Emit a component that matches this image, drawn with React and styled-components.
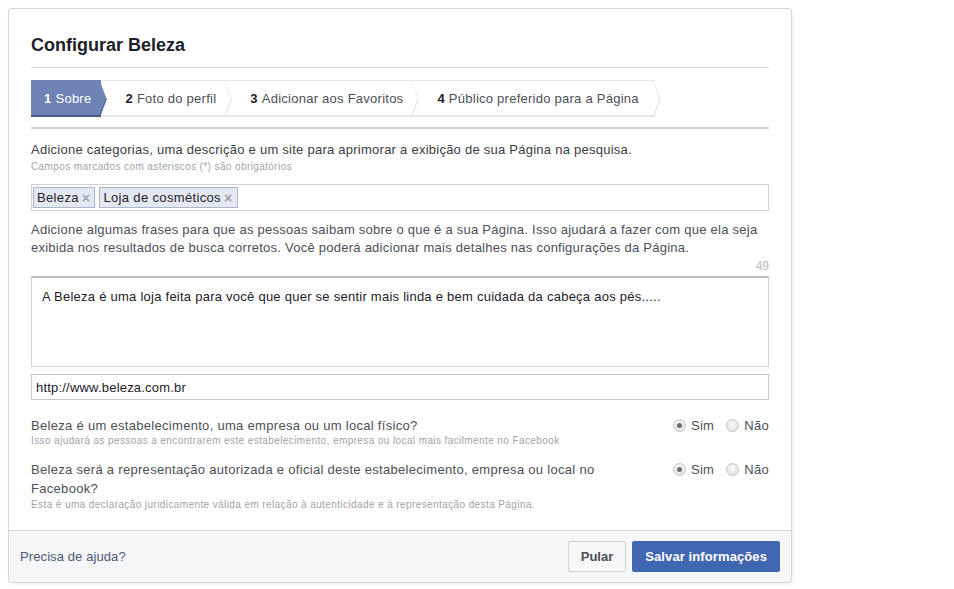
import React, { useState } from 'react'
import styled, { createGlobalStyle } from 'styled-components'

const Global = createGlobalStyle`
	body {
		margin: 0;
		background: #fff;
		font-family: "Liberation Sans", Arial, sans-serif;
		color: #4b4f56;
	}
`

const Card = styled.div`
	margin: 8px;
	width: 782px;
	border: 1px solid #d3d6db;
	border-radius: 3px;
	box-shadow: 1px 1px 3px rgba(0,0,0,0.08);
	background: #fff;
	overflow: hidden;
`

const Body = styled.div`
	padding: 0 22px 19px 22px;
`

const Header = styled.div`
	padding: 25px 0 11px;
	border-bottom: 1px solid #d6d8dc;
`

const Title = styled.h1`
	margin: 0;
	font-size: 18px;
	line-height: 22px;
	font-weight: bold;
	color: #1d2129;
`

const Steps = styled.div`
	display: flex;
	margin-top: 12px;
	height: 37px;
`

const Step = styled.div`
	position: relative;
	display: flex;
	align-items: center;
	height: 34px;
	padding: 0 ${(props) => (props.last ? '16px' : '10px')} 0 ${(props) => (props.first ? '13px' : '24px')};
	background: ${(props) => (props.active ? '#6d84b4' : '#fff')};
	border-top: 1px solid ${(props) => (props.active ? '#6d84b4' : '#e4e6ea')};
	border-bottom: 2px solid ${(props) => (props.active ? '#4a5d89' : '#e4e6ea')};
	color: ${(props) => (props.active ? '#fff' : '#4b4f56')};
	font-size: 13px;
	letter-spacing: 0.25px;
	z-index: ${(props) => props.z};
	&:after {
		content: "";
		position: absolute;
		top: 5px;
		right: -12px;
		width: 25px;
		height: 25px;
		background: ${(props) => (props.active ? '#6d84b4' : '#fff')};
		border-top: 1px solid ${(props) => (props.active ? '#6d84b4' : '#dcdee3')};
		border-right: 2px solid ${(props) => (props.active ? '#4a5d89' : '#dcdee3')};
		transform: scaleX(0.38) rotate(45deg);
	}
	b {
		font-weight: bold;
		color: ${(props) => (props.active ? '#fff' : '#1d2129')};
		margin-right: 4px;
	}
`

const Divider = styled.div`
	margin-top: 10px;
	height: 2px;
	background: #cfd1d5;
`

const Intro = styled.p`
	margin: 13px 0 0;
	font-size: 13px;
	line-height: 16px;
	color: #3a3d42;
	letter-spacing: 0.25px;
`

const Hint = styled.p`
	margin: ${(props) => props.m || '3px 0 0'};
	font-size: 10px;
	line-height: 12px;
	color: #a0a3a8;
	letter-spacing: 0.4px;
`

const TagBox = styled.div`
	margin-top: 11px;
	height: 25px;
	border: 1px solid #cfd1d5;
	display: flex;
	align-items: center;
	gap: 4px;
	padding: 0 1px;
`

const Tag = styled.span`
	display: inline-flex;
	align-items: center;
	height: 19px;
	padding: 0 4px 0 3px;
	background: #e4e8f1;
	border: 1px solid #a9b6d0;
	font-size: 13px;
	letter-spacing: 0.35px;
	color: #1d2129;
	span {
		margin-left: 3px;
		color: #9aa3b6;
		font-size: 14px;
		font-weight: bold;
	}
`

const Desc = styled.p`
	margin: 10px 0 0;
	font-size: 13px;
	line-height: 18px;
	color: #4b4f56;
	letter-spacing: 0.25px;
`

const Counter = styled.div`
	margin-top: 2px;
	text-align: right;
	font-size: 12px;
	line-height: 14px;
	color: #b8bbc0;
`

const Area = styled.div`
	margin-top: 3px;
	height: 91px;
	border: 1px solid #cfd1d5;
	border-top: 2px solid #b8bcc3;
	padding: 11px 10px;
	box-sizing: border-box;
	font-size: 13px;
	letter-spacing: 0.25px;
	color: #1d2129;
`

const Input = styled.div`
	margin-top: 7px;
	height: 26px;
	border: 1px solid #c4c7cc;
	box-sizing: border-box;
	display: flex;
	align-items: center;
	padding: 0 4px;
	font-size: 13px;
	letter-spacing: 0.2px;
	color: #1d2129;
`

const Question = styled.div`
	display: flex;
	justify-content: space-between;
	margin-top: ${(props) => props.mt};
`

const QText = styled.div`
	width: 620px;
	font-size: 13px;
	line-height: 19px;
	color: #4b4f56;
	letter-spacing: 0.3px;
`

const Radios = styled.div`
	display: flex;
	align-items: center;
	height: 19px;
	gap: 12px;
	font-size: 13px;
	letter-spacing: 0.3px;
	color: #4b4f56;
`

const RadioLabel = styled.label`
	display: flex;
	align-items: center;
	gap: 5px;
	cursor: pointer;
`

const Dot = styled.span`
	width: 11px;
	height: 11px;
	border-radius: 50%;
	border: 1px solid #c3c5c9;
	background: radial-gradient(circle at 50% 40%, #fafafa, #dcdde0);
	display: flex;
	align-items: center;
	justify-content: center;
	&:after {
		content: "";
		width: 5px;
		height: 5px;
		border-radius: 50%;
		background: ${(props) => (props.on ? '#6a6d73' : 'transparent')};
	}
`

const Footer = styled.div`
	display: flex;
	align-items: center;
	justify-content: space-between;
	height: 51px;
	padding: 0 11px;
	background: #f5f6f7;
	border-top: 1px solid #d3d6db;
`

const Help = styled.a`
	font-size: 13px;
	color: #4b5a78;
	text-decoration: none;
	letter-spacing: 0.1px;
`

const Buttons = styled.div`
	display: flex;
	gap: 6px;
`

const Button = styled.button`
	height: 31px;
	padding: 0 ${(props) => (props.primary ? '12px' : '12px')};
	border-radius: 2px;
	font-family: inherit;
	font-size: 13px;
	letter-spacing: ${(props) => (props.primary ? '0.1px' : '0')};
	font-weight: bold;
	border: 1px solid ${(props) => (props.primary ? '#4267b2' : '#ced0d4')};
	background: ${(props) => (props.primary ? '#4267b2' : '#f6f7f9')};
	color: ${(props) => (props.primary ? '#fff' : '#4b4f56')};
`

const Radio = ({ value, onChange }) => (
	<Radios>
		<RadioLabel onClick={() => onChange(true)}><Dot on={value} />Sim</RadioLabel>
		<RadioLabel onClick={() => onChange(false)}><Dot on={!value} />Não</RadioLabel>
	</Radios>
)

const steps = [
	['1', 'Sobre'],
	['2', 'Foto do perfil'],
	['3', 'Adicionar aos Favoritos'],
	['4', 'Público preferido para a Página'],
]

const App = () => {
	const [local, setLocal] = useState(true)
	const [oficial, setOficial] = useState(true)
	return (
		<>
			<Global />
			<Card>
				<Body>
					<Header>
						<Title>Configurar Beleza</Title>
					</Header>
					<Steps>
						{steps.map(([n, label], i) => (
							<Step key={n} active={i === 0} first={i === 0} last={i === 3} z={10 - i}>
								<b>{n}</b>{label}
							</Step>
						))}
					</Steps>
					<Divider />
					<Intro>Adicione categorias, uma descrição e um site para aprimorar a exibição de sua Página na pesquisa.</Intro>
					<Hint>Campos marcados com asteriscos (*) são obrigatórios</Hint>
					<TagBox>
						<Tag>Beleza<span>×</span></Tag>
						<Tag>Loja de cosméticos<span>×</span></Tag>
					</TagBox>
					<Desc>Adicione algumas frases para que as pessoas saibam sobre o que é a sua Página. Isso ajudará a fazer com que ela seja exibida nos resultados de busca corretos. Você poderá adicionar mais detalhes nas configurações da Página.</Desc>
					<Counter>49</Counter>
					<Area>A Beleza é uma loja feita para você que quer se sentir mais linda e bem cuidada da cabeça aos pés.....</Area>
					<Input>http://www.beleza.com.br</Input>
					<Question mt="16px">
						<div>
							<QText>Beleza é um estabelecimento, uma empresa ou um local físico?</QText>
							<Hint m="0">Isso ajudará as pessoas a encontrarem este estabelecimento, empresa ou local mais facilmente no Facebook</Hint>
						</div>
						<Radio value={local} onChange={setLocal} />
					</Question>
					<Question mt="13px">
						<div>
							<QText>Beleza será a representação autorizada e oficial deste estabelecimento, empresa ou local no Facebook?</QText>
							<Hint m="1px 0 0">Esta é uma declaração juridicamente válida em relação à autenticidade e à representação desta Página.</Hint>
						</div>
						<Radio value={oficial} onChange={setOficial} />
					</Question>
				</Body>
				<Footer>
					<Help href="#">Precisa de ajuda?</Help>
					<Buttons>
						<Button>Pular</Button>
						<Button primary>Salvar informações</Button>
					</Buttons>
				</Footer>
			</Card>
		</>
	)
}

export default App
